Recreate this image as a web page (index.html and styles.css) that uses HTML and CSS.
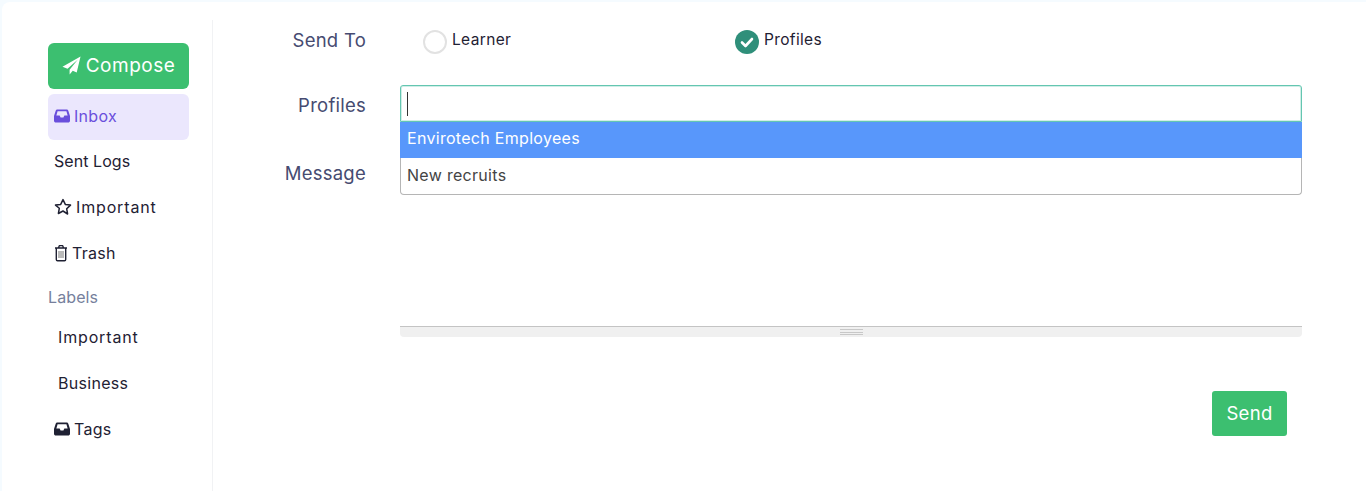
FILE: index.html
```html
<!DOCTYPE html>
<html lang="en">
<head>
<meta charset="utf-8">
<title>Compose</title>
<link rel="stylesheet" href="styles.css">
</head>
<body>
<div class="card">
  <aside class="side">
    <a class="compose">
      <svg class="i-send" viewBox="0 0 20 20"><path d="M19.500.5.500 11.300l5.300 2.100L16.500 4 8 14.400V19.500l3.300-3.900 4.200 1.700z" fill="#fff"/></svg>
      Compose
    </a>
    <a class="nav active">
      <svg class="i-inbox" viewBox="0.5 1 17 14"><path d="M4.200 1h9.600c.9 0 1.600.5 1.900 1.300L17.500 8v5c0 1.100-.9 2-2 2h-13c-1.100 0-2-.9-2-2V8l1.800-5.700C2.600 1.500 3.300 1 4.200 1zM3 7.500h3.500l1 2h3l1-2H15l-1.300-4.500H4.300z" fill="currentColor" fill-rule="evenodd"/></svg>
      Inbox
    </a>
    <a class="nav snug">Sent Logs</a>
    <a class="nav wide">
      <svg class="i-star" viewBox="0 0 18 18"><path d="m9 1.600 2.300 4.800 5.200.7-3.800 3.700.9 5.200L9 13l-4.600 2.500.9-5.200L1.500 7.100l5.200-.7z" fill="none" stroke="currentColor" stroke-width="1.500" stroke-linejoin="round"/></svg>
      Important
    </a>
    <a class="nav">
      <svg class="i-trash" viewBox="0 0 14 18"><path d="M1 4h12M4.500 4l.8-2.400h3.400L9.500 4M2.300 4v11.500c0 .8.500 1.300 1.200 1.300h7c.7 0 1.200-.5 1.200-1.300V4" fill="none" stroke="currentColor" stroke-width="1.400" stroke-linejoin="round"/><path d="M5 7v7M7 7v7M9 7v7" stroke="#777" stroke-width="1"/></svg>
      Trash
    </a>
    <div class="heading">Labels</div>
    <a class="nav sub wide">Important</a>
    <a class="nav sub">Business</a>
    <a class="nav">
      <svg class="i-inbox" viewBox="0.5 1 17 14"><path d="M4.200 1h9.600c.9 0 1.600.5 1.900 1.300L17.500 8v5c0 1.100-.9 2-2 2h-13c-1.100 0-2-.9-2-2V8l1.800-5.700C2.600 1.500 3.300 1 4.200 1zM3 7.500h3.500l1 2h3l1-2H15l-1.300-4.500H4.300z" fill="currentColor" fill-rule="evenodd"/></svg>
      Tags
    </a>
  </aside>
  <main class="main">
    <div class="row row-send">
      <label class="label">Send To</label>
      <div class="radios">
        <span class="radio"><span class="dot"></span>Learner</span>
        <span class="radio"><span class="dot on"><svg viewBox="0 0 24 24"><path d="m7 12.500 3.500 3.500L17 9" fill="none" stroke="#fff" stroke-width="2.600" stroke-linecap="round" stroke-linejoin="round"/></svg></span>Profiles</span>
      </div>
    </div>
    <div class="row row-profiles">
      <label class="label">Profiles</label>
      <div class="select">
        <div class="search"><span class="caret"></span></div>
        <ul class="options">
          <li class="option hover">Envirotech Employees</li>
          <li class="option">New recruits</li>
        </ul>
      </div>
    </div>
    <div class="row row-message">
      <label class="label">Message</label>
      <div class="editor">
        <div class="status"><span class="grip"></span></div>
      </div>
    </div>
    <div class="actions"><button class="send">Send</button></div>
  </main>
</div>
</body>
</html>
```
FILE: styles.css
```css
* { box-sizing: border-box; }
html, body { height: 100%; }
body {
  margin: 0;
  padding: 2px 0 0 2px;
  background: #f5fbff;
  font-family: Inter, "Liberation Sans", sans-serif;
  color: #1f2133;
  overflow: hidden;
}
.card {
  display: flex;
  height: 489px;
  padding-top: 18px;
  background: #fff;
  border-radius: 8px 0 0 0;
}
.side {
  width: 211px;
  flex: none;
  padding: 23px 23px 0 46px;
  border-right: 1px solid #f1f2f4;
}
.compose {
  display: flex;
  align-items: center;
  justify-content: center;
  gap: 5px;
  height: 46px;
  margin-bottom: 5px;
  padding-bottom: 2px;
  background: #3cbf70;
  color: #fff;
  border-radius: 6px;
  font-size: 19px;
  letter-spacing: .5px;
}
.i-send { width: 19px; height: 19px; }
.nav {
  display: flex;
  align-items: center;
  gap: 4px;
  height: 46px;
  padding: 0 0 2px 6px;
  font-size: 16px;
  letter-spacing: .3px;
  border-radius: 6px;
}
.nav.wide { letter-spacing: .85px; }
.nav.snug { letter-spacing: .05px; }
.nav.sub { padding-left: 10px; }
.nav.active { margin-bottom: -1px; background: #ebe7fd; color: #6a4fdc; }
.i-inbox { width: 16px; height: 14px; }
.i-star { width: 18px; height: 18px; }
.i-trash { width: 14px; height: 18px; }
.heading {
  height: 44px;
  padding-top: 10px;
  margin-bottom: -6px;
  font-size: 16px;
  letter-spacing: .1px;
  color: #767f9c;
}
.main {
  flex: 1;
  min-width: 0;
  padding-right: 64px;
}
.row {
  display: grid;
  grid-template-columns: 153px 902px;
  column-gap: 34px;
}
.label {
  text-align: right;
  font-size: 18.500px;
  letter-spacing: .25px;
  color: #464b71;
}
.row-send { height: 65px; padding-top: 9px; }
.radios { display: flex; padding: 1px 0 0 23px; }
.radio {
  width: 312px;
  display: flex;
  align-items: flex-start;
  gap: 5px;
  font-size: 15.500px;
  letter-spacing: .35px;
  line-height: 20px;
}
.dot {
  width: 24px;
  height: 24px;
  border: 2px solid #e2e2e2;
  border-radius: 50%;
  flex: none;
  background: #fff;
}
.on { border: 0; background: #2f8f7a; }
.on svg { display: block; width: 24px; height: 24px; }
.row-profiles { height: 68px; }
.row-profiles .label { padding-top: 9px; }
.select { position: relative; }
.search {
  height: 37px;
  padding: 6px 0 0 6px;
  border: 1px solid #64c6b1;
  border-radius: 3px 3px 0 0;
  box-shadow: inset 0 0 0 1px rgba(100, 198, 177, .3);
}
.caret { display: block; width: 1px; height: 24px; background: #333; }
.options {
  position: absolute;
  top: 37px;
  left: 0;
  right: 0;
  margin: 0;
  padding: 0;
  list-style: none;
  background: #fff;
  border: 1px solid #b5b5b5;
  border-top: 0;
  border-radius: 0 0 4px 4px;
}
.option {
  height: 36px;
  padding-left: 6px;
  line-height: 34px;
  font-size: 16px;
  letter-spacing: .3px;
  color: #444;
}
.hover { margin: 0 -1px; padding-left: 7px; line-height: 32px; background: #5897fb; color: #fff; }
.row-message { height: 184px; }
.row-message .label { padding-top: 9px; }
.editor { display: flex; flex-direction: column; justify-content: flex-end; height: 184px; }
.status {
  display: flex;
  justify-content: center;
  height: 11px;
  background: #f0f0f0;
  border-top: 1px solid #c4c4c4;
  border-radius: 0 0 4px 4px;
  padding-top: 2px;
}
.grip {
  width: 23px;
  height: 6px;
  border-top: 1px solid #c8c8c8;
  border-bottom: 1px solid #c8c8c8;
  background: linear-gradient(#c8c8c8, #c8c8c8) center / 100% 1px no-repeat;
}
.actions { display: flex; justify-content: flex-end; padding: 54px 15px 0 0; }
.send {
  width: 75px;
  height: 45px;
  padding: 0 0 2px;
  border: 0;
  border-radius: 3px;
  background: #3cbf70;
  color: #fff;
  font: 18.500px Inter, "Liberation Sans", sans-serif;
  letter-spacing: .3px;
}
```
